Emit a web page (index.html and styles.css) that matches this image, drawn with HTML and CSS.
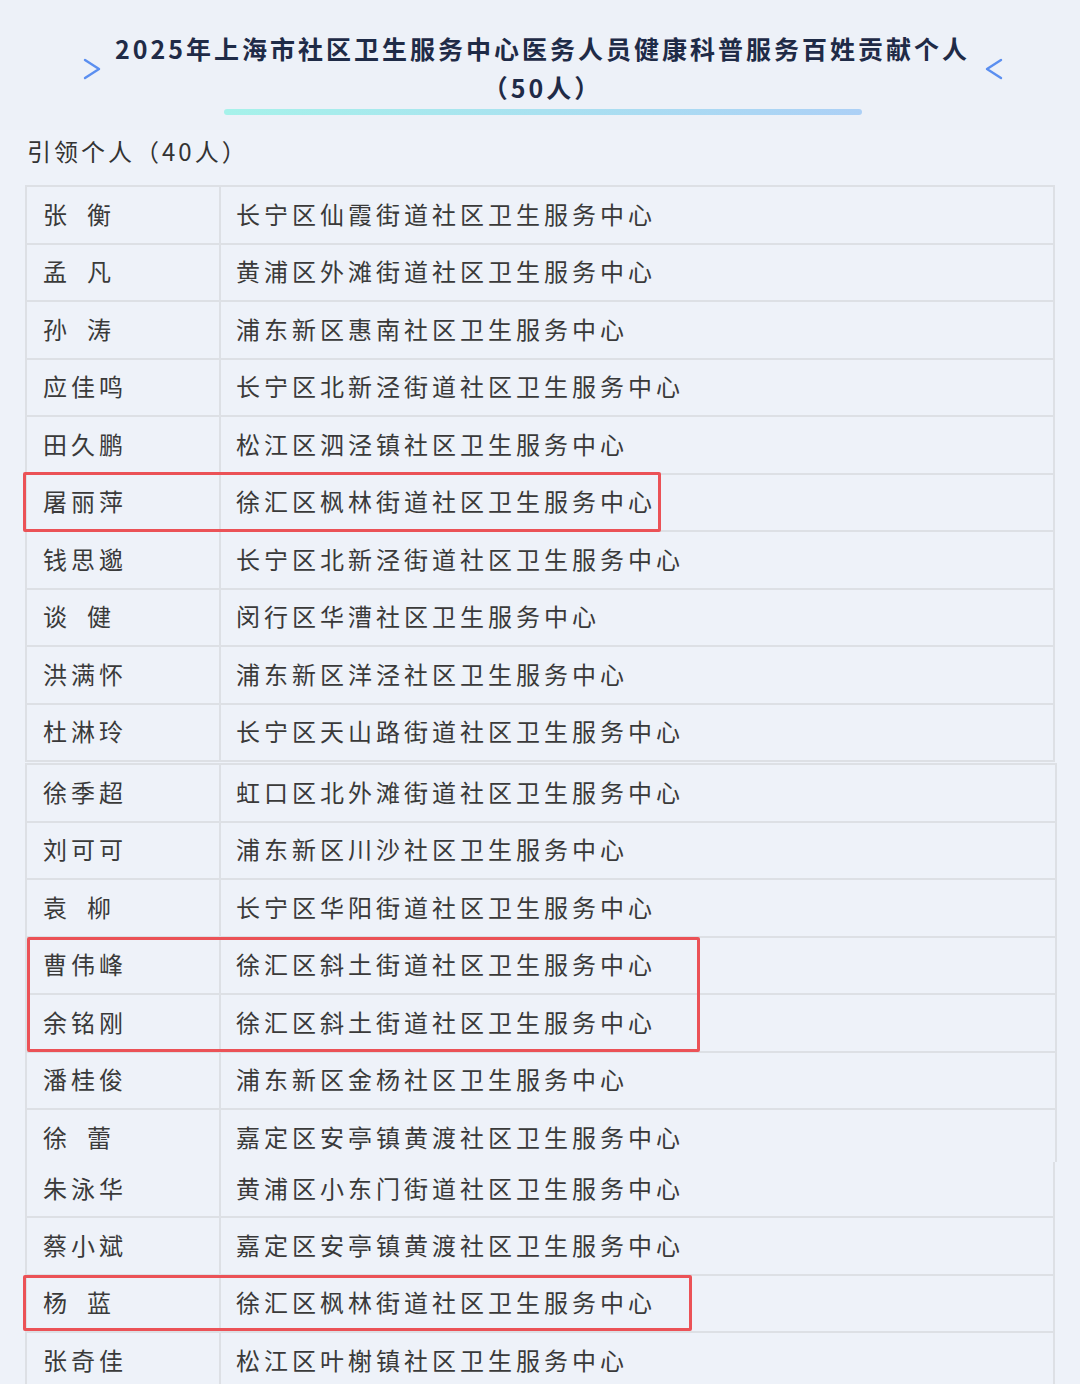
FILE: index.html
```html
<!DOCTYPE html>
<html lang="zh-CN">
<head>
    <meta charset="UTF-8">
    <title>2025年上海市社区卫生服务中心医务人员健康科普服务百姓贡献个人</title>
    <link rel="stylesheet" href="styles.css">
</head>
<body>

<div class="header">
    <div class="title-row">
        <svg class="chev" width="18" height="22" viewBox="0 0 18 22"><polyline points="2,2 16,11 2,20" fill="none" stroke="#5b8ff0" stroke-width="2.4" stroke-linecap="round" stroke-linejoin="round"/></svg>
        <h1>2025年上海市社区卫生服务中心医务人员健康科普服务百姓贡献个人<br>（50人）</h1>
        <svg class="chev" width="18" height="22" viewBox="0 0 18 22"><polyline points="16,2 2,11 16,20" fill="none" stroke="#5b8ff0" stroke-width="2.4" stroke-linecap="round" stroke-linejoin="round"/></svg>
    </div>
    <div class="bar"></div>
</div>

<div class="content">
    <h2>引领个人（40人）</h2>

    <div class="list part-a">
        <div class="row"><div class="name">张&ensp;衡</div><div class="org">长宁区仙霞街道社区卫生服务中心</div></div>
        <div class="row"><div class="name">孟&ensp;凡</div><div class="org">黄浦区外滩街道社区卫生服务中心</div></div>
        <div class="row"><div class="name">孙&ensp;涛</div><div class="org">浦东新区惠南社区卫生服务中心</div></div>
        <div class="row"><div class="name">应佳鸣</div><div class="org">长宁区北新泾街道社区卫生服务中心</div></div>
        <div class="row"><div class="name">田久鹏</div><div class="org">松江区泗泾镇社区卫生服务中心</div></div>
        <div class="row"><div class="name">屠丽萍</div><div class="org">徐汇区枫林街道社区卫生服务中心</div><span class="mark mark-1"></span></div>
        <div class="row"><div class="name">钱思邈</div><div class="org">长宁区北新泾街道社区卫生服务中心</div></div>
        <div class="row"><div class="name">谈&ensp;健</div><div class="org">闵行区华漕社区卫生服务中心</div></div>
        <div class="row"><div class="name">洪满怀</div><div class="org">浦东新区洋泾社区卫生服务中心</div></div>
        <div class="row"><div class="name">杜淋玲</div><div class="org">长宁区天山路街道社区卫生服务中心</div></div>
    </div>

    <div class="list part-b">
        <div class="row"><div class="name">徐季超</div><div class="org">虹口区北外滩街道社区卫生服务中心</div></div>
        <div class="row"><div class="name">刘可可</div><div class="org">浦东新区川沙社区卫生服务中心</div></div>
        <div class="row"><div class="name">袁&ensp;柳</div><div class="org">长宁区华阳街道社区卫生服务中心</div></div>
        <div class="group">
            <div class="row"><div class="name">曹伟峰</div><div class="org">徐汇区斜土街道社区卫生服务中心</div></div>
            <div class="row"><div class="name">余铭刚</div><div class="org">徐汇区斜土街道社区卫生服务中心</div></div>
            <span class="mark mark-2"></span>
        </div>
        <div class="row"><div class="name">潘桂俊</div><div class="org">浦东新区金杨社区卫生服务中心</div></div>
        <div class="row row-cut"><div class="name">徐&ensp;蕾</div><div class="org">嘉定区安亭镇黄渡社区卫生服务中心</div></div>
    </div>

    <div class="list part-c">
        <div class="row row-join"><div class="name">朱泳华</div><div class="org">黄浦区小东门街道社区卫生服务中心</div></div>
        <div class="row"><div class="name">蔡小斌</div><div class="org">嘉定区安亭镇黄渡社区卫生服务中心</div></div>
        <div class="row"><div class="name">杨&ensp;蓝</div><div class="org">徐汇区枫林街道社区卫生服务中心</div><span class="mark mark-3"></span></div>
        <div class="row"><div class="name">张奇佳</div><div class="org">松江区叶榭镇社区卫生服务中心</div></div>
    </div>
</div>

</body>
</html>
```

FILE: styles.css
```css
body {
    margin: 0;
    background-color: #eef2f9;
    font-family: "Noto Sans CJK SC", "Noto Sans", sans-serif;
    color: #3a3a3a;
}
.header {
    height: 130px;
    background-color: #edf1f8;
    box-sizing: border-box;
    padding-top: 29px;
}
.title-row {
    display: flex;
    align-items: center;
    padding-left: 83px;
}
.title-row .chev {
    margin-top: 2px;
}
h1 {
    margin: 0 15px 0 14px;
    text-align: center;
    font-size: 25px;
    line-height: 39px;
    font-weight: 700;
    letter-spacing: 3px;
    color: #1f2b47;
    white-space: nowrap;
}
.bar {
    width: 638px;
    height: 6px;
    margin: 2px 0 0 224px;
    border-radius: 3px;
    background: linear-gradient(90deg, #a6f2ea, #acd0f6);
}
.content {
    padding-left: 25px;
}
h2 {
    margin: 0;
    padding-left: 2px;
    height: 55px;
    line-height: 42px;
    font-size: 24px;
    font-weight: 400;
    letter-spacing: 3px;
    color: #333;
}
.list {
    width: 1030px;
    box-sizing: border-box;
    border: 2px solid #dde0e5;
    border-bottom: none;
}
.part-b {
    width: 1032px;
    margin-top: 1px;
}
.part-c {
    border-top: none;
}
.row {
    position: relative;
    display: flex;
    height: 57.5px;
    box-sizing: border-box;
    border-bottom: 2px solid #dde0e5;
    font-size: 24px;
    letter-spacing: 4px;
    white-space: nowrap;
}
.row .name {
    width: 194px;
    box-sizing: border-box;
    padding: 0 0 3px 16px;
    border-right: 2px solid #dde0e5;
    display: flex;
    align-items: center;
}
.row .org {
    padding: 0 0 3px 15px;
    display: flex;
    align-items: center;
}
.row-cut {
    height: 52px;
    border-bottom: none;
    padding-top: 4px;
}
.row-cut .name {
    margin-top: -4px;
    padding-top: 4px;
}
.row-join {
    height: 56px;
}
.group {
    position: relative;
}
.mark {
    position: absolute;
    border: 3px solid #eb5257;
    border-radius: 2px;
    box-sizing: border-box;
    pointer-events: none;
}
.mark-1 {
    left: -4px;
    top: -3px;
    bottom: -2px;
    width: 638px;
}
.mark-2 {
    left: 0;
    top: -1px;
    bottom: 1px;
    width: 673px;
}
.mark-3 {
    left: -4px;
    top: -1px;
    bottom: 0;
    width: 669px;
}
```
